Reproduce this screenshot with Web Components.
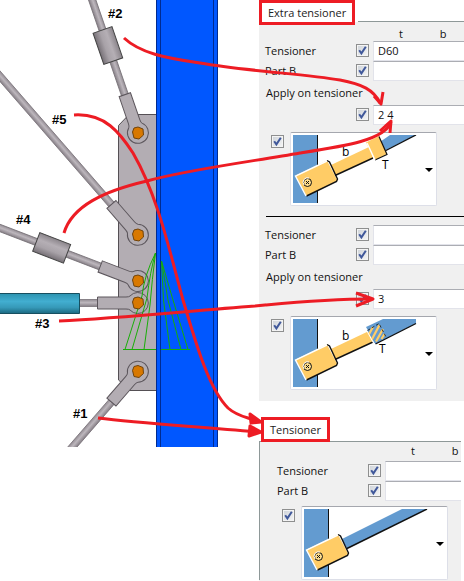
<!DOCTYPE html>
<html lang="en">
<head>
<meta charset="utf-8">
<title>Tensioner settings</title>
<style>
body { margin: 0; background: #fff; color: #111; font-family: "Open Sans", "Noto Sans", sans-serif; font-size: 11px; }
</style>
</head>
<body>
<tensioner-guide></tensioner-guide>
<script>
const define = (name, html) => customElements.define(name, class extends HTMLElement {
  connectedCallback() {
    if (this.shadowRoot) return;
    this.attachShadow({ mode: 'open' }).innerHTML = typeof html === 'function' ? html(this) : html;
  }
});

/* Red-framed tab with the rule that continues beside it */
define('tab-title', el => `
<style>
:host { display: flex; align-items: flex-start; }
button { box-sizing: border-box; height: 25px; padding: 0 6px; border: 3px solid #ed1c24; background: #fff; color: #222; font: inherit; line-height: 18px; white-space: nowrap; min-width: var(--tab-width, 0); }
i { flex: 1; height: 22px; background: linear-gradient(#8e9898, #8e9898) 3px 100% / 100% 1px no-repeat, #fff; }
:host([framed]) { padding-left: 2px; background: linear-gradient(#8e9898, #8e9898) 0 100% / 100% 1px no-repeat, #fff; }
:host([framed]) i { background: none; }
</style>
<button type="button"><slot></slot></button><i></i>`);

define('check-box', el => `
<style>
:host { display: block; width: 13px; height: 13px; }
label { display: block; position: relative; height: 13px; }
input { appearance: none; display: block; box-sizing: border-box; width: 13px; height: 13px; margin: 0; border: 1px solid #8e8f8f; background: linear-gradient(135deg, #cdd2d8, #f6f6f6); box-shadow: inset 0 0 0 1px #f4f4f4; }
svg { position: absolute; left: 0; top: 0; pointer-events: none; display: none; }
input:checked + svg { display: block; }
</style>
<label><input type="checkbox" checked aria-label="${el.getAttribute('label')}">
<svg width="13" height="13" viewBox="0 0 13 13"><path d="M3.2 6.2L5.4 9.4L9.8 2.8" fill="none" stroke="#40589a" stroke-width="2"/></svg></label>`);

define('field-row', el => `
<style>
:host { display: grid; grid-template-columns: 87px 13px 1fr; column-gap: 4px; align-items: center; height: 20px; }
label { white-space: nowrap; line-height: 18px; }
input { box-sizing: border-box; width: 100%; min-width: 0; height: 20px; margin: 0; padding: 0 0 1px 4px; border: 1px solid #e2e3ea; border-top-color: #abadb3; border-right: 0; background: #fff; color: #111; font: inherit; outline: 0; border-radius: 0; }
check-box { margin-top: -2px; }
</style>
<label for="f">${el.getAttribute('label') || ''}</label>
<check-box label="Use ${el.getAttribute('label') || 'positions'}"></check-box>
<input id="f" type="text" value="${el.getAttribute('value') || ''}" aria-label="${el.getAttribute('label') || 'Apply on tensioner'}">`);

define('column-heads', `
<style>
:host { display: grid; grid-template-columns: 42px 42px; padding-left: 115px; line-height: 18px; text-align: center; height: var(--head-height, 16px); overflow: visible; }
</style><span>t</span><span>b</span>`);

define('apply-caption', `
<style>:host { display: block; line-height: 24px; height: 24px; padding-left: 1px; white-space: nowrap; }</style><slot></slot>`);

/* Miniature connection picture, three variants */
const plate = `
<path d="M2.5 40.5L34 25.5L44.5 45.5L13.5 61Z" fill="#ffcc66"/>
<path d="M34 25.5L36.5 27L44.5 44L43.5 46.5L13.5 61" fill="none" stroke="#111" stroke-width="1.4"/>
<path d="M34 26L2.5 41L13 61" fill="none" stroke="#fff" stroke-width="1.4"/>
<circle cx="14.5" cy="47.5" r="4" fill="#ffdd8c" stroke="#111"/><path d="M11 50A4.5 4.5 0 0 1 16 43" fill="none" stroke="#fff"/>
<path d="M13 46l3 3M16 46l-3 3" stroke="#111"/>`;
const column = `<path d="M0 0H24V68H0Z" fill="#639bd0"/><path d="M24.5 0V68" stroke="#111"/>`;
const rod = `<path d="M38 30L76 12L80 23L42 40Z" fill="#ffcc66"/><path d="M42 40.5L80 23" stroke="#111" stroke-width="1.4"/>`;
const pictures = {
  collar: column + `<path d="M84 9L97 0H123L90 16.5Z" fill="#639bd0"/><path d="M90 17L123 0" stroke="#111" stroke-width="1.4"/>` + rod + plate +
    `<path d="M73 7.500L86 1L94 19L82 25Z" fill="#ffcc66"/><path d="M86 1.5L94 19.5L82 25" fill="none" stroke="#111" stroke-width="1.2"/><path d="M82 25L74 8" stroke="#fff" stroke-width="1.4"/>
    <text x="49" y="21">b</text><text x="89" y="34">T</text>`,
  nut: column + rod + `<path d="M73 8L90 0H123V4.5L82.5 25Z" fill="#639bd0"/><path d="M123 4.5L82.5 25" stroke="#111" stroke-width="1.4"/>
    <path d="M74.500 11.500L86 4.500L93 18L81.500 24Z" fill="#639bd0"/>
    <path d="M75 17L80 8M78.500 21L86.500 6M83 22.500L90 10M88.500 20L91.500 15" stroke="#ffcc66" stroke-width="2.200"/>
    <path d="M74.500 11.500L86 4.500L93 18" fill="none" stroke="#111" stroke-width=".8" stroke-dasharray="3 2"/><path d="M74 12L81 25" stroke="#fff"/>` + plate +
    `<text x="49" y="21">b</text><text x="86" y="34">T</text>`,
  plain: column + `<path d="M38 30L98 0H123L43 39.5Z" fill="#639bd0"/><path d="M43 39.5L123 0" stroke="#111" stroke-width="1.4"/>` + plate
};
define('picture-choice', el => `
<style>
:host { display: grid; grid-template-columns: 13px 147px; column-gap: 6px; padding-left: var(--choice-indent, 6px); }
check-box { margin-top: 3px; }
div { display: grid; box-sizing: border-box; height: 74px; border: 1px solid #dddfe8; border-top-color: #a5a7ae; border-radius: 2px; background: #fff; }
svg, select { grid-area: 1 / 1; }
svg { margin: 2px; pointer-events: none; z-index: 1; font: 12px "Open Sans", sans-serif; }
select { appearance: none; width: 100%; height: 100%; border: 0; margin: 0; background: transparent; }
</style>
<check-box label="Use connection shape"></check-box>
<div><select aria-label="Connection shape"><option></option></select>
<svg width="141" height="68" viewBox="0 0 141 68">${pictures[el.getAttribute('kind')]}<path d="M132 33H140L136 37Z" fill="#000"/></svg></div>`);

define('form-panel', `
<style>
:host { display: block; background: #f0f0f0; padding-bottom: var(--end, 11px); }
.body { padding-left: 6px; }
:host([framed]) { margin: 16px 3px 0 0; }
:host([framed]) .body { border-left: 1px solid #8e9898; padding-left: 17px; }
</style>
<slot name="tab"></slot><div class="body"><slot></slot></div>`);

/* Side view: column, gusset plate and five rods */
const fork = `<path d="M-40.5 -6H-12Q-9 -6 -8 -7A10.5 10.5 0 1 1 -8 7Q-9 6 -12 6H-40.5Z" fill="#b3adb3" stroke="#5c565c"/>`;
const bolt = (x, y) => `<path transform="translate(${x} ${y})" d="M0 -6L5 -4L5.5 2L1 6L-4 5L-5.5 -1L-4 -5Z" fill="#d87800" stroke="#70430b"/>`;
const bar = len => `<path d="M-40 -3.5H-${len}V3.5H-40Z" fill="url(#r)" stroke="#777177" stroke-width=".8"/>`;
const sleeve = `<path d="M-109 -10H-76V10H-109Z" fill="url(#s)" stroke="#444"/>`;
const member = (y, a, len, extra = '') => `<g transform="translate(138 ${y}) rotate(${a})">${bar(len)}${extra}${fork}</g>`;
define('steel-drawing', `
<style>:host { display: block; } svg { display: block; } text { font: bold 13px "Liberation Sans", Arial, sans-serif; fill: #000; }</style>
<svg width="259" height="447" viewBox="0 0 259 447" role="img" aria-label="Tensioners one to five on a column">
<defs>
<linearGradient id="r" x2="0" y2="1"><stop stop-color="#948d94"/><stop offset=".45" stop-color="#bdb7bd"/><stop offset="1" stop-color="#857e85"/></linearGradient>
<linearGradient id="s" x2="0" y2="1"><stop stop-color="#8a848a"/><stop offset=".35" stop-color="#b5afb5"/><stop offset=".65" stop-color="#a8a2a8"/><stop offset="1" stop-color="#767076"/></linearGradient>
<linearGradient id="c" x2="0" y2="1"><stop stop-color="#2c93b0"/><stop offset=".4" stop-color="#42aed0"/><stop offset=".7" stop-color="#3699b8"/><stop offset="1" stop-color="#1b6880"/></linearGradient>
</defs>
<path d="M118.500 125.500L129 114.500H157V390.500H130L118.500 380Z" fill="#b3adb3" stroke="#555055"/>
<path d="M156 -1H218V447H156Z" fill="#0057ff"/>
<path d="M156.500 0V447M160.500 0V447M213.500 0V447M217.500 0V447" stroke="#002b91"/>
${member(133, 71, 150, sleeve)}${member(235, 49, 230)}${member(281, 21, 155, sleeve)}${member(303, 0, 59)}${member(371.5, -49, 125)}
<path d="M-1 293.500H79.500V313.500H-1Z" fill="url(#c)" stroke="#174f60"/>
<g fill="none" stroke="#18ad08">
<path d="M155.500 253Q144 276 142 296L125 349.500M155.500 253Q150 272 147 298L132 349.500M155.500 253Q152 280 150 305L144 349.500M123 349.500H156"/>
<path d="M161.500 261L163.500 300L170 349.500M161.500 261L168 300L181 349.500M161.500 261L173 300L188 349.500M161 349.500H190"/></g>
${bolt(138, 133)}${bolt(138, 235)}${bolt(138, 281)}${bolt(138, 303)}${bolt(138, 371.5)}
<text x="108" y="18">#2</text><text x="52" y="124">#5</text><text x="16" y="224">#4</text><text x="35" y="328">#3</text><text x="73" y="418">#1</text>
</svg>`);

/* Red pointers laid over the drawing and the forms */
define('pointer-layer', `
<style>:host { position: absolute; left: 0; top: 0; pointer-events: none; z-index: 2; } svg { display: block; }</style>
<svg width="464" height="581" viewBox="0 0 464 581" fill="none" stroke="#ed1c24" stroke-width="3" stroke-linejoin="round">
<path d="M124 38C140 53 165 58 200 63C245 71 305 74 340 80C362 84 374 90 380 103"/>
<path d="M374 96L381 104L383 92"/>
<path d="M74 115C105 113 120 133 133 153C158 196 170 253 183 300C195 340 208 388 228 408C238 417 248 417 259 422"/>
<path d="M64 233C72 206 104 191 147 181C185 170 255 161 300 153C345 146 385 140 391 122"/>
<path d="M380 131L391 121L390 133"/>
<path d="M59 321C120 318 188 311 255 306C296 302 335 299 372 299"/>
<path d="M356 293L373 299L356 306"/>
<path d="M98 418C138 423 190 426 259 432"/>
<path d="M250 414L261 422L251 423ZM250 426L261 432L249 436Z" fill="#ed1c24"/>
</svg>`);

define('tensioner-guide', `
<style>
:host { display: grid; grid-template-columns: 259px minmax(0, 1fr); position: relative; overflow: hidden; align-items: start; }
hr { height: 1px; border: 0; margin: 10px 0 8px 1px; background: #000; }
picture-choice { margin-top: 7px; }
.last { --head-height: 19px; --end: 1px; --tab-width: 68px; --choice-indent: 5px; }
.first { --tab-width: 95px; }
.last picture-choice { margin-top: 5px; }
</style>
<steel-drawing></steel-drawing>
<section>
<form-panel class="first"><tab-title slot="tab">Extra tensioner</tab-title>
<column-heads></column-heads>
<field-row label="Tensioner" value="D60"></field-row><field-row label="Part B"></field-row>
<apply-caption>Apply on tensioner</apply-caption><field-row value="2 4"></field-row>
<picture-choice kind="collar"></picture-choice><hr>
<field-row label="Tensioner"></field-row><field-row label="Part B"></field-row>
<apply-caption>Apply on tensioner</apply-caption><field-row value="3"></field-row>
<picture-choice kind="nut"></picture-choice></form-panel>
<form-panel class="last" framed><tab-title slot="tab" framed>Tensioner</tab-title>
<column-heads></column-heads>
<field-row label="Tensioner"></field-row><field-row label="Part B"></field-row>
<picture-choice kind="plain"></picture-choice></form-panel>
</section>
<pointer-layer></pointer-layer>`);
</script>
</body>
</html>
